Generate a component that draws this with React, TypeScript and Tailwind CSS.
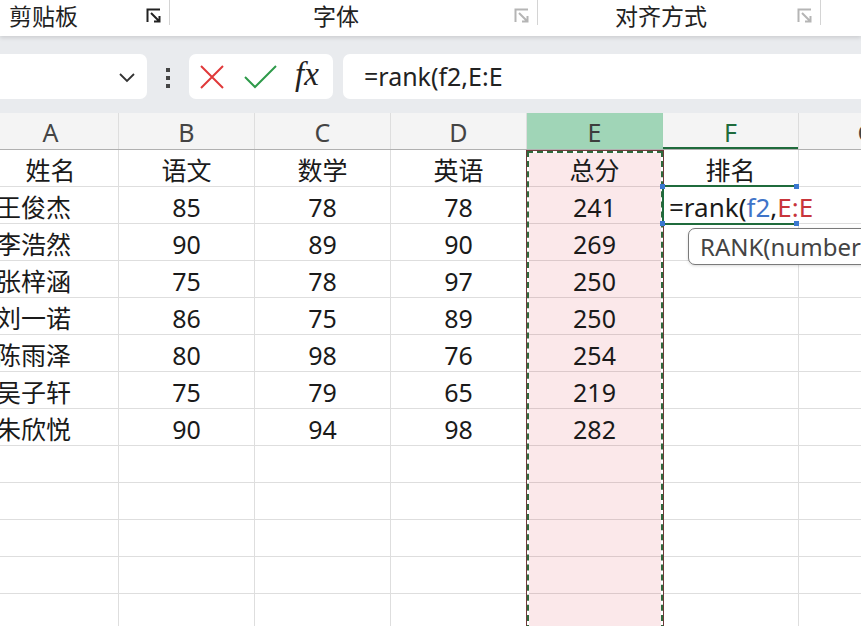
import React from 'react';

const rows: string[][] = [
    ['王俊杰', '85', '78', '78', '241'],
    ['李浩然', '90', '89', '90', '269'],
    ['张梓涵', '75', '78', '97', '250'],
    ['刘一诺', '86', '75', '89', '250'],
    ['陈雨泽', '80', '98', '76', '254'],
    ['吴子轩', '75', '79', '65', '219'],
    ['朱欣悦', '90', '94', '98', '282'],
];

const font = { fontFamily: '"Noto Sans", "Noto Sans CJK SC", sans-serif' };

const Launcher = ({ dark }: { dark?: boolean }) => (
    <svg width="16" height="16" viewBox="0 0 16 16" className={dark ? 'text-[#222]' : 'text-[#b5b5b5]'}>
        <path d="M1.5 14V1.5H14" fill="none" stroke="currentColor" strokeWidth="2" />
        <path d="M5 5l8 8M8 13.5h5.5V8" fill="none" stroke="currentColor" strokeWidth="2" />
    </svg>
);

const Ribbon = () => (
    <div className="relative z-10 flex h-[36px] bg-white text-[23px] text-[#222] shadow-[0_2px_4px_rgba(0,0,0,0.12)]">
        <div className="flex w-[169px] items-center justify-between pl-[9px] pr-[7px] pb-[4px]">
            <span>剪贴板</span>
            <Launcher dark />
        </div>
        <div className="mb-[11px] w-px bg-[#d4d4d4]" />
        <div className="relative flex w-[367px] items-center pb-[4px]">
            <span className="ml-[143px]">字体</span>
            <span className="ml-auto mr-[7px]">
                <Launcher />
            </span>
        </div>
        <div className="mb-[11px] w-px bg-[#d4d4d4]" />
        <div className="flex w-[282px] items-center pb-[4px]">
            <span className="ml-[77px]">对齐方式</span>
            <span className="ml-auto mr-[7px]">
                <Launcher />
            </span>
        </div>
        <div className="mb-[11px] w-px bg-[#d4d4d4]" />
    </div>
);

const FormulaBar = () => (
    <div className="flex h-[77px] items-start bg-[#e9ebee] pt-[18px]">
        <div className="flex h-[45px] w-[147px] items-center justify-end rounded-r-[7px] bg-white pr-[10px]">
            <svg width="20" height="20" viewBox="0 0 20 20">
                <path d="M3 7l7 7 7-7" fill="none" stroke="#333" strokeWidth="1.8" />
            </svg>
        </div>
        <div className="flex w-[42px] flex-col items-center gap-[4px] pt-[14px]">
            <div className="h-[4px] w-[4px] bg-[#444]" />
            <div className="h-[4px] w-[4px] bg-[#444]" />
            <div className="h-[4px] w-[4px] bg-[#444]" />
        </div>
        <div className="flex h-[45px] w-[144px] items-center rounded-[7px] bg-white">
            <svg width="26" height="26" viewBox="0 0 26 26" className="ml-[10px]">
                <path d="M2 2l22 22M24 2L2 24" fill="none" stroke="#e0393a" strokeWidth="2" />
            </svg>
            <svg width="34" height="26" viewBox="0 0 34 26" className="ml-[19px]">
                <path d="M1 13l10 10L32 2" fill="none" stroke="#2e9a4a" strokeWidth="2" />
            </svg>
            <span
                className="ml-[17px] pb-[4px] text-[33px] italic leading-none text-[#222]"
                style={{ fontFamily: '"Liberation Serif", serif' }}
            >
                fx
            </span>
        </div>
        <div className="ml-[10px] flex h-[45px] flex-1 items-center rounded-l-[7px] bg-white pl-[21px] text-[25px] text-[#222]">
            =rank(f2,E:E
        </div>
    </div>
);

const letters = ['A', 'B', 'C', 'D', 'E', 'F', 'G'];

const HeaderRow = () => (
    <div className="flex h-[37px] border-b border-[#b0b0b0] bg-[#f4f4f4]">
        {letters.map((l) => (
            <div
                key={l}
                className={
                    'flex h-full w-[136px] shrink-0 items-center justify-center border-r pt-[4px] text-[25px] ' +
                    (l === 'E'
                        ? 'border-[#9fd3b5] bg-[#a0d5b7] text-[#3d3d3d]'
                        : l === 'F'
                          ? 'border-[#dcdcdc] text-[#1f6b3c] shadow-[inset_0_-2px_0_#1f6b3c]'
                          : 'border-[#dedede] text-[#444]')
                }
            >
                {l}
            </div>
        ))}
    </div>
);

const Cell = ({ children, col, left }: { children?: React.ReactNode; col: number; left?: boolean }) => (
    <div
        className={
            'flex h-[37px] w-[136px] shrink-0 items-center border-r border-b pt-[5px] text-[25px] text-[#1a1a1a] ' +
            (left ? 'justify-start pl-[13px] ' : 'justify-center ') +
            (col === 4 ? 'border-b-[#dcc9cb] border-r-[#dcdcdc] bg-[#fbe8ea]' : 'border-[#dedede]')
        }
    >
        {children}
    </div>
);

const ActiveCell = () => (
    <div className="relative z-20 flex h-[37px] w-[136px] shrink-0 items-center border-b border-[#dedede] pt-[5px] text-[26px] text-[#1a1a1a]">
        <div className="pointer-events-none absolute left-[-1px] right-[2px] top-[-2px] bottom-[-2px] border-y-2 border-l-2 border-[#1f6b3c]" />
        <div className="absolute left-[-3px] top-[-3px] h-[5px] w-[5px] bg-[#3b78d0]" />
        <div className="absolute right-[0px] top-[-3px] h-[5px] w-[5px] bg-[#3b78d0]" />
        <div className="absolute left-[-3px] bottom-[-3px] h-[5px] w-[5px] bg-[#3b78d0]" />
        <div className="absolute right-[0px] bottom-[-3px] h-[5px] w-[5px] bg-[#3b78d0]" />
        <span className="whitespace-nowrap pl-[6px]">
            =rank(<span className="text-[#3f74c8]">f2</span>,<span className="text-[#c8353b]">E:E</span>
        </span>
        <div className="absolute left-[25px] top-[41px] flex h-[37px] w-[260px] items-center rounded-[7px] border border-[#7a7a7a] bg-white pl-[11px] text-[24px] text-[#444] shadow-[0_1px_3px_rgba(0,0,0,0.15)]">
            RANK(number1,ref)
        </div>
    </div>
);

const Grid = () => {
    const body: string[][] = [['姓名', '语文', '数学', '英语', '总分', '排名', ''], ...rows.map((r) => [...r, '', ''])];
    while (body.length < 13) body.push(['', '', '', '', '', '', '']);
    return (
        <div className="relative ml-[-17px]">
            <HeaderRow />
            {body.map((r, i) => (
                <div key={i} className="flex">
                    {r.map((v, c) =>
                        i === 1 && c === 5 ? (
                            <ActiveCell key={c} />
                        ) : (
                            <Cell key={c} col={c} left={c === 0 && i > 0}>
                                {v}
                            </Cell>
                        ),
                    )}
                </div>
            ))}
            {/* copy marquee around column E */}
            <div className="pointer-events-none absolute left-[543px] top-[37px] bottom-0 w-[138px] border-x border-t border-[#6e3a3a]">
                <div className="absolute inset-0 border-x-2 border-t-2 border-white" />
                <div className="absolute inset-0 border-x-2 border-t-2 border-dashed border-[#2f6a3d]" />
            </div>
        </div>
    );
};

export default function App() {
    return (
        <div className="h-[626px] w-[861px] overflow-hidden bg-white" style={font}>
            <Ribbon />
            <FormulaBar />
            <Grid />
        </div>
    );
}
